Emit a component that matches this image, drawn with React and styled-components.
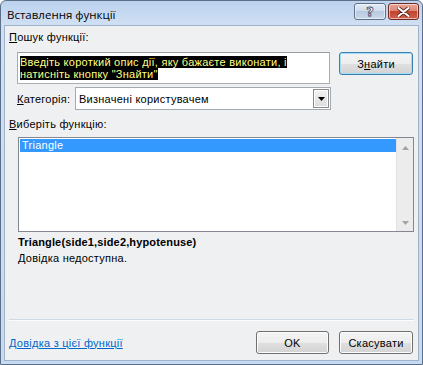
import React from 'react';
import styled, { createGlobalStyle } from 'styled-components';

const Global = createGlobalStyle`
  html, body { margin: 0; padding: 0; background: #ffffff; }
  body { font-family: "Liberation Sans", Tahoma, Arial, sans-serif; font-size: 11px; color: #000; letter-spacing: 0.25px; }
  * { box-sizing: border-box; }
`;

const Window = styled.div`
  width: 423px;
  height: 365px;
  display: flex;
  flex-direction: column;
  border: 1px solid #5b6f88;
  border-radius: 6px 6px 0 0;
  padding: 0 3px 3px;
  background: linear-gradient(#bcd2ee 0px, #d0e0f4 24px, #c6daf1 100%);
`;

const TitleBar = styled.div`
  height: 24px;
  flex: none;
  display: flex;
  align-items: flex-start;
  justify-content: space-between;
  padding-left: 3px;
`;

const Title = styled.div`
  font-family: "Open Sans", "Noto Sans", sans-serif;
  font-size: 11.5px;
  letter-spacing: 0;
  line-height: 16px;
  margin-top: 6px;
  color: #000;
`;

const Caption = styled.div`
  display: flex;
  gap: 2px;
  margin-top: 2px;
`;

const CapButton = styled.div`
  width: ${p => p.$w}px;
  height: 17px;
  border: 1px solid ${p => (p.$close ? '#6d2a22' : '#5f7189')};
  border-radius: 3px;
  display: flex;
  align-items: center;
  justify-content: center;
  background: ${p =>
    p.$close
      ? 'linear-gradient(#e8a496 0%, #dc8876 45%, #c4442f 50%, #d0614c 100%)'
      : 'linear-gradient(#e3ecf6 0%, #cfdcec 45%, #b8cae0 50%, #cad9ea 100%)'};
  box-shadow: inset 0 0 0 1px rgba(255, 255, 255, 0.55);
`;

const HelpGlyph = styled.span`
  font-family: "DejaVu Sans", sans-serif;
  font-weight: bold;
  font-size: 13px;
  line-height: 13px;
  letter-spacing: 0;
  color: #ffffff;
  -webkit-text-stroke: 0.8px #3e4e63;
`;

const Body = styled.div`
  flex: 1;
  display: flex;
  flex-direction: column;
  border: 1px solid #9fb2c9;
  background: #eff0f2;
  padding: 5px 5px 6px 4px;
`;

const Label = styled.div`
  line-height: 13px;
  height: 13px;
  margin-top: ${p => p.$mt || 0}px;
  white-space: nowrap;
`;

const SearchRow = styled.div`
  display: flex;
  gap: 9px;
  margin: 8px 0 0 8px;
  align-items: flex-start;
`;

const SearchBox = styled.div`
  width: 313px;
  height: 32px;
  background: #fff;
  border: 1px solid #abadb3;
  border-top-color: #9a9ca3;
  padding: 3px 2px;
  line-height: 12px;
  white-space: nowrap;
`;

const Hl = styled.span`
  background: #000;
  color: #ffff80;
`;

const PushButton = styled.button`
  width: ${p => p.$w || 74}px;
  height: 23px;
  padding: 0;
  font-family: inherit;
  font-size: 11px;
  letter-spacing: 0.25px;
  color: #000;
  border-radius: 3px;
  border: 1px solid ${p => (p.$def ? '#3c7fb1' : '#707070')};
  background: linear-gradient(#f4f4f4 0%, #ededed 50%, #e0e0e0 50%, #d3d3d3 100%);
  box-shadow: inset 0 0 0 1px ${p => (p.$def ? '#9fdcf6' : '#fcfcfc')};
`;

const CategoryRow = styled.div`
  display: flex;
  align-items: center;
  margin: 3px 0 0 8px;
  height: 23px;
`;

const CatLabel = styled.div`
  width: 58px;
  white-space: nowrap;
`;

const Select = styled.div`
  width: 256px;
  height: 23px;
  display: flex;
  align-items: center;
  justify-content: space-between;
  background: #fff;
  border: 1px solid #a5a9b0;
  padding: 1px 1px 1px 3px;
`;

const DropButton = styled.div`
  width: 16px;
  height: 19px;
  border: 1px solid #8a8a8a;
  background: linear-gradient(#f3f3f3, #dcdcdc);
  box-shadow: inset 0 0 0 1px #ffffff;
  display: flex;
  align-items: center;
  justify-content: center;
`;

const ListBox = styled.div`
  height: 95px;
  margin: 6px -1px 0 9px;
  border: 1px solid #828790;
  background: #fff;
  display: flex;
`;

const Items = styled.div`
  flex: 1;
  padding: 1px 0 0 1px;
`;

const Item = styled.div`
  height: 13px;
  line-height: 13px;
  padding-left: 2px;
  background: ${p => (p.$sel ? '#3399ff' : 'transparent')};
  color: ${p => (p.$sel ? '#fff' : '#000')};
`;

const ScrollBar = styled.div`
  width: 17px;
  background: #ececec;
  border-left: 1px solid #e2e2e2;
  display: flex;
  flex-direction: column;
  justify-content: space-between;
  align-items: center;
  padding: 8px 0 6px;
`;

const Signature = styled.div`
  margin: 4px 0 0 9px;
  font-weight: bold;
  font-size: 11px;
  line-height: 13px;
  letter-spacing: 0.15px;
`;

const Desc = styled.div`
  margin: 3px 0 0 9px;
  line-height: 13px;
`;

const Spacer = styled.div`
  flex: 1;
`;

const Separator = styled.div`
  height: 2px;
  border-top: 1px solid #cddbe7;
  border-bottom: 1px solid #fbfcfd;
  margin-right: -1px;
`;

const Footer = styled.div`
  display: flex;
  align-items: center;
  margin-top: 10px;
  height: 23px;
`;

const HelpLink = styled.a`
  color: #0066cc;
  text-decoration: underline;
  cursor: pointer;
  margin-right: auto;
`;

const Buttons = styled.div`
  display: flex;
  gap: 10px;
`;

const Tri = ({ dir = 'down', color = '#000', w = 7, h = 4 }) => (
  <svg width={w} height={h} viewBox={`0 0 ${w} ${h}`}>
    {dir === 'down' ? (
      <polygon points={`0,0 ${w},0 ${w / 2},${h}`} fill={color} />
    ) : (
      <polygon points={`0,${h} ${w},${h} ${w / 2},0`} fill={color} />
    )}
  </svg>
);

export default function App() {
  return (
    <>
      <Global />
      <Window>
        <TitleBar>
          <Title>Вставлення функції</Title>
          <Caption>
            <CapButton $w={32}>
              <HelpGlyph>?</HelpGlyph>
            </CapButton>
            <CapButton $w={31} $close>
              <svg width="13" height="10" viewBox="0 0 13 10">
                <path
                  d="M1.5 1 L11.5 9 M11.5 1 L1.5 9"
                  stroke="#4a1a14"
                  strokeWidth="3.6"
                  strokeLinecap="round"
                />
                <path
                  d="M1.5 1 L11.5 9 M11.5 1 L1.5 9"
                  stroke="#ffffff"
                  strokeWidth="2.2"
                  strokeLinecap="round"
                />
              </svg>
            </CapButton>
          </Caption>
        </TitleBar>
        <Body>
          <Label>
            <u>П</u>ошук функції:
          </Label>
          <SearchRow>
            <SearchBox>
              <Hl>Введіть короткий опис дії, яку бажаєте виконати, і</Hl>
              <br />
              <Hl>натисніть кнопку "Знайти"</Hl>
            </SearchBox>
            <PushButton $def>
              З<u>н</u>айти
            </PushButton>
          </SearchRow>
          <CategoryRow>
            <CatLabel>
              <u>К</u>атегорія:
            </CatLabel>
            <Select>
              <span>Визначені користувачем</span>
              <DropButton>
                <Tri />
              </DropButton>
            </Select>
          </CategoryRow>
          <Label $mt={8}>
            <u>В</u>иберіть функцію:
          </Label>
          <ListBox>
            <Items>
              <Item $sel>Triangle</Item>
            </Items>
            <ScrollBar>
              <Tri dir="up" color="#a3a3a3" />
              <Tri dir="down" color="#a3a3a3" />
            </ScrollBar>
          </ListBox>
          <Signature>Triangle(side1,side2,hypotenuse)</Signature>
          <Desc>Довідка недоступна.</Desc>
          <Spacer />
          <Separator />
          <Footer>
            <HelpLink>Довідка з цієї функції</HelpLink>
            <Buttons>
              <PushButton $w={73}>OK</PushButton>
              <PushButton $w={74}>Скасувати</PushButton>
            </Buttons>
          </Footer>
        </Body>
      </Window>
    </>
  );
}
